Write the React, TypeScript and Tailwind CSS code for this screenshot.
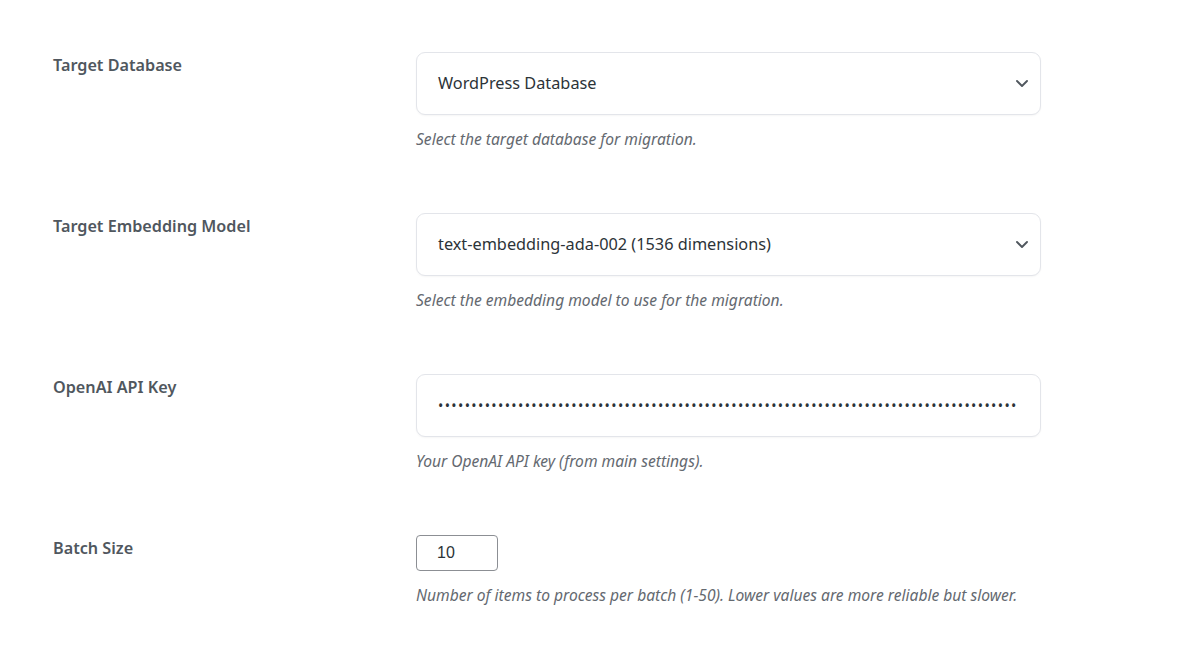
import React from "react";

const Chevron = () => (
  <svg width="14" height="9" viewBox="0 0 14 9" fill="none" className="text-[#50575e]">
    <path d="M2 2l5 5 5-5" stroke="currentColor" strokeWidth="1.9" strokeLinecap="round" strokeLinejoin="round" />
  </svg>
);

const font = { fontFamily: '"Noto Sans", "Open Sans", sans-serif' };

function Row({ label, children, desc, last }: { label: string; children: React.ReactNode; desc: string; last?: boolean }) {
  return (
    <div className={`flex ${last ? "" : "h-[161px]"}`}>
      <div className="w-[363px] shrink-0 pt-[1px] text-[16.2px] leading-[24px] font-semibold text-[#50575e]">{label}</div>
      <div className="flex flex-col">
        {children}
        <p className="mt-[14px] text-[15.6px] leading-[20px] italic text-[#646970]">{desc}</p>
      </div>
    </div>
  );
}

function SelectBox({ value }: { value: string }) {
  return (
    <div className="w-[625px] h-[63px] rounded-[9px] border border-[#e3e5ea] bg-white shadow-[0_1px_2px_rgba(0,0,0,0.04)] flex items-center justify-between pl-[21px] pr-[11px]">
      <span className="text-[16.3px] text-[#2c3338]">{value}</span>
      <Chevron />
    </div>
  );
}

export default function App() {
  return (
    <div className="min-h-[652px] w-[1178px] bg-white pl-[53px] pt-[52px]" style={font}>
      <Row label="Target Database" desc="Select the target database for migration.">
        <SelectBox value="WordPress Database" />
      </Row>
      <Row label="Target Embedding Model" desc="Select the embedding model to use for the migration.">
        <SelectBox value="text-embedding-ada-002 (1536 dimensions)" />
      </Row>
      <Row label="OpenAI API Key" desc="Your OpenAI API key (from main settings).">
        <div className="w-[625px] h-[63px] rounded-[9px] border border-[#e3e5ea] bg-white shadow-[0_1px_2px_rgba(0,0,0,0.04)] flex items-center pl-[21px] overflow-hidden">
          <span className="text-[14px] tracking-[1.4px] text-[#2c3338] whitespace-nowrap">
            {"•".repeat(87)}
          </span>
        </div>
      </Row>
      <Row label="Batch Size" desc="Number of items to process per batch (1-50). Lower values are more reliable but slower." last>
        <div className="w-[82px] h-[36px] rounded-[4px] border border-[#8c8f94] bg-white flex items-center pl-[20px] text-[16px] text-[#2c3338]" style={{ fontFamily: '"Liberation Sans", Arial, sans-serif' }}>
          10
        </div>
      </Row>
    </div>
  );
}
